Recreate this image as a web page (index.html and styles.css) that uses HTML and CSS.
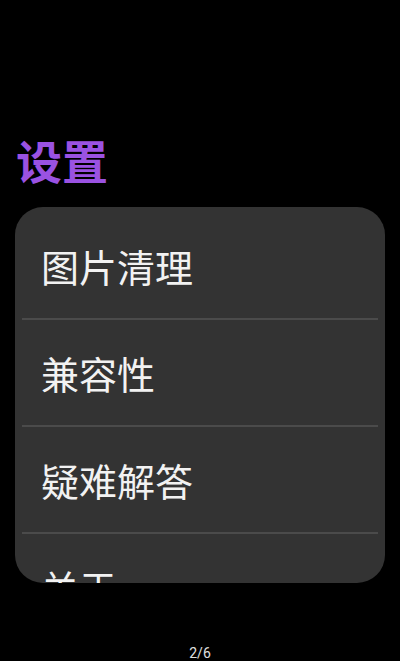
FILE: index.html
```html
<!DOCTYPE html>
<html lang="zh">
<head>
<meta charset="utf-8">
<title>设置</title>
<link rel="stylesheet" href="styles.css">
</head>
<body>
<div class="screen">
  <h1 class="title">设置</h1>
  <div class="card">
    <div class="row">图片清理</div>
    <div class="row">兼容性</div>
    <div class="row">疑难解答</div>
    <div class="row">关于</div>
  </div>
  <div class="pager">2/6</div>
</div>
</body>
</html>
```
FILE: styles.css
```css
html, body {
  margin: 0;
  padding: 0;
  background: #000;
}
.screen {
  width: 400px;
  height: 661px;
  overflow: hidden;
  display: flex;
  flex-direction: column;
  font-family: "Noto Sans CJK SC", "Noto Sans", sans-serif;
}
.title {
  margin: 136px 0 0 16px;
  font-size: 46px;
  line-height: 46px;
  font-weight: 700;
  color: #9a52e2;
}
.card {
  margin: 25px 15px 0 15px;
  height: 376px;
  border-radius: 28px;
  background: #333333;
  overflow: hidden;
  padding-top: 6px;
  box-sizing: border-box;
}
.row {
  height: 105px;
  margin: 0 7px;
  padding-left: 19px;
  display: flex;
  align-items: center;
  font-size: 38px;
  color: #f2f2f2;
  border-bottom: 2px solid #4b4b4b;
}
.row:last-child {
  border-bottom: none;
}
.pager {
  margin-top: 62px;
  text-align: center;
  font-family: "Roboto", "Noto Sans", sans-serif;
  font-size: 14px;
  line-height: 16px;
  color: #e0e0e0;
}
```
